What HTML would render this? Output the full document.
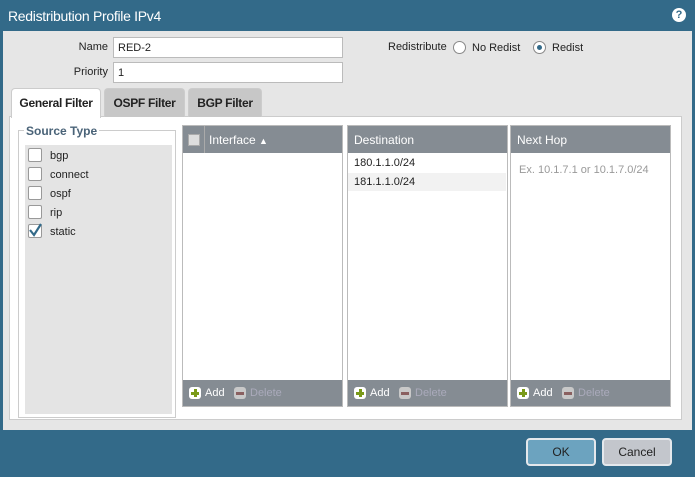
<!DOCTYPE html>
<html><head><style>
*{box-sizing:border-box;margin:0;padding:0}
body{width:695px;height:477px;background:#336a89;font-family:"Liberation Sans",sans-serif;font-size:11px;color:#222;position:relative;overflow:hidden}
.a{position:absolute}
.title{left:8px;top:8px;color:#fff;font-size:14px;letter-spacing:-0.3px}
.help{left:672px;top:8px;width:14px;height:14px;border-radius:50%;background:#fff;color:#336a89;font-size:11px;font-weight:bold;text-align:center;line-height:14px}
.content{left:3px;top:31px;width:689px;height:399px;background:#e6e6e6}
.lbl{text-align:right;width:100px}
.inp{background:#fff;border:1px solid #bbb;height:21px;width:230px;padding:4px 4px;font-size:11px}
.tab{top:88px;height:29px;border:1px solid #ccc;border-bottom:none;border-radius:4px 4px 0 0;background:#c7c7c7;font-weight:bold;font-size:12px;text-align:center;line-height:28px;letter-spacing:-0.3px}
.panel{left:9px;top:116px;width:673px;height:304px;background:#fff;border:1px solid #ccc}
.fs{left:18px;top:130px;width:158px;height:288px;border:1px solid #ccc}
.leg{left:24px;top:124px;background:#fff;padding:0 2px;font-weight:bold;color:#4a6378;font-size:12px}
.list{left:25px;top:145px;width:147px;height:269px;background:#e4e4e4}
.cb{width:14px;height:14px;border:1px solid #999;background:#fff;border-radius:2px}
.tbl{top:125px;height:282px;width:161px;border:1px solid #bbb;background:#fff}
.th{position:absolute;left:0;top:0;right:0;height:27px;background:#858c93;color:#fff;font-size:12px;line-height:28px;padding-left:6px}
.tf{position:absolute;left:0;bottom:0;right:0;height:26px;background:#858c93;color:#fff;font-size:11px}
.plus{position:absolute;top:7px;width:12px;height:12px;background:#fff;border-radius:3px}
.plus::before{content:"";position:absolute;left:5px;top:2px;width:3px;height:8px;background:#7a9a1a}
.plus::after{content:"";position:absolute;left:2px;top:5px;width:8px;height:3px;background:#7a9a1a}
.minus{position:absolute;top:7px;width:12px;height:12px;background:#c9c9c9;border-radius:3px}
.minus::after{content:"";position:absolute;left:2px;top:5px;width:8px;height:3px;background:#8a6060}
.btn{top:438px;height:28px;width:70px;border:2px solid #e4e8ec;border-radius:4px;text-align:center;line-height:24px;font-size:12px;color:#222}
.radio{width:13px;height:13px;border-radius:50%;border:1px solid #888;background:#fff}
</style></head><body>
<div class="a title">Redistribution Profile IPv4</div>
<div class="a help">?</div>
<div class="a content"></div>
<div class="a lbl" style="left:8px;top:41px">Name</div>
<div class="a inp" style="left:113px;top:37px">RED-2</div>
<div class="a lbl" style="left:8px;top:66px">Priority</div>
<div class="a inp" style="left:113px;top:62px">1</div>
<div class="a" style="left:388px;top:41px">Redistribute</div>
<div class="a radio" style="left:453px;top:41px"></div>
<div class="a" style="left:472px;top:42px">No Redist</div>
<div class="a radio" style="left:533px;top:41px"><div style="position:absolute;left:3px;top:3px;width:5px;height:5px;border-radius:50%;background:#336a89"></div></div>
<div class="a" style="left:552px;top:42px">Redist</div>
<div class="a panel"></div>
<div class="a tab" style="left:11px;width:90px;background:#fff;height:30px">General Filter</div>
<div class="a tab" style="left:104px;width:81px">OSPF Filter</div>
<div class="a tab" style="left:188px;width:74px">BGP Filter</div>
<div class="a fs"></div>
<div class="a leg">Source Type</div>
<div class="a list"></div>
<div class="a cb" style="left:28px;top:148px"></div><div class="a" style="left:50px;top:150px">bgp</div>
<div class="a cb" style="left:28px;top:167px"></div><div class="a" style="left:50px;top:169px">connect</div>
<div class="a cb" style="left:28px;top:186px"></div><div class="a" style="left:50px;top:188px">ospf</div>
<div class="a cb" style="left:28px;top:205px"></div><div class="a" style="left:50px;top:207px">rip</div>
<div class="a cb" style="left:28px;top:224px"><svg width="14" height="14" style="position:absolute;left:-1px;top:-2px"><path d="M2 7 L6 12 L13 1" stroke="#336a89" stroke-width="2.2" fill="none"/></svg></div><div class="a" style="left:50px;top:226px">static</div>

<div class="a tbl" style="left:182px"><div class="th" style="padding-left:26px">Interface <span style="font-size:9px">&#9650;</span></div>
<div style="position:absolute;left:5px;top:8px;width:12px;height:12px;background:#ddd;border:1px solid #aaa"></div>
<div style="position:absolute;left:21px;top:0;width:1px;height:27px;background:#aaa"></div>
<div class="tf"><div class="plus" style="left:6px"></div><span class="a" style="left:22px;top:7px">Add</span><div class="minus" style="left:51px"></div><span class="a" style="left:67px;top:7px;color:#aab">Delete</span></div></div>

<div class="a tbl" style="left:347px"><div class="th">Destination</div>
<div class="a" style="left:6px;top:31px">180.1.1.0/24</div>
<div style="position:absolute;left:0;top:47px;width:158px;height:18px;background:#f2f2f2"></div>
<div class="a" style="left:6px;top:50px">181.1.1.0/24</div>
<div class="tf"><div class="plus" style="left:6px"></div><span class="a" style="left:22px;top:7px">Add</span><div class="minus" style="left:51px"></div><span class="a" style="left:67px;top:7px;color:#aab">Delete</span></div></div>

<div class="a tbl" style="left:510px"><div class="th">Next Hop</div>
<div class="a" style="left:8px;top:38px;color:#999">Ex. 10.1.7.1 or 10.1.7.0/24</div>
<div class="tf"><div class="plus" style="left:6px"></div><span class="a" style="left:22px;top:7px">Add</span><div class="minus" style="left:51px"></div><span class="a" style="left:67px;top:7px;color:#aab">Delete</span></div></div>

<div class="a btn" style="left:526px;background:#6ca3bf">OK</div>
<div class="a btn" style="left:602px;background:#c3c6cc">Cancel</div>
</body></html>
